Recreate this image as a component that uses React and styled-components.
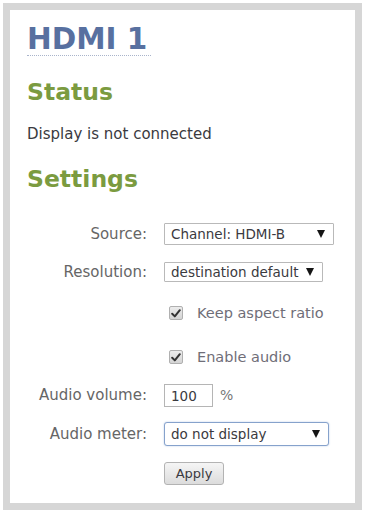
import styled, { createGlobalStyle } from 'styled-components'

const Global = createGlobalStyle`
  html, body {
    margin: 0;
    padding: 0;
    background: #ffffff;
  }
  body {
    font-family: "DejaVu Sans", Verdana, sans-serif;
  }
`;

const Page = styled.div`
  padding: 3px;
`;

const Frame = styled.div`
  box-sizing: border-box;
  width: 359px;
  height: 507px;
  border: 7px solid #d6d6d6;
  background: #fff;
  padding: 13px 0 0 17px;
`;

const Title = styled.h1`
  display: inline-block;
  margin: 0;
  padding-right: 4px;
  font-size: 29.5px;
  line-height: 32px;
  font-weight: bold;
  color: #5870a0;
  border-bottom: 1px dotted #a9b4cb;
`;

const Section = styled.h2`
  margin: ${({ $mt }) => $mt}px 0 0;
  font-size: 23.5px;
  line-height: 28px;
  font-weight: bold;
  color: #7b9b40;
`;

const StatusText = styled.p`
  margin: 19px 0 0;
  font-size: 15px;
  line-height: 18px;
  color: #3a3a40;
`;

const Row = styled.div`
  display: grid;
  grid-template-columns: 120px 1fr;
  column-gap: 17px;
  align-items: center;
  height: 24px;
  margin-top: ${({ $mt }) => $mt}px;
`;

const Label = styled.span`
  text-align: right;
  font-size: 15px;
  color: #666;
`;

const Control = styled.div`
  display: flex;
  align-items: center;
`;

const Select = styled.div`
  box-sizing: border-box;
  display: flex;
  align-items: center;
  justify-content: space-between;
  width: ${({ $w }) => $w}px;
  height: ${({ $h }) => $h}px;
  padding: 0 8px 0 6px;
  border: 1px solid ${({ $focus }) => ($focus ? '#86a2cc' : '#b9b9b9')};
  border-radius: ${({ $focus }) => ($focus ? 3 : 1)}px;
  box-shadow: ${({ $focus }) => ($focus ? '0 0 2px #b8cbe6' : 'none')};
  background: #fff;
  font-size: 13.5px;
  color: #3a3a40;
`;

const Arrow = styled.span`
  width: 0;
  height: 0;
  border-left: 4px solid transparent;
  border-right: 4px solid transparent;
  border-top: 8px solid #151515;
`;

const Check = styled.span`
  box-sizing: border-box;
  display: flex;
  align-items: center;
  justify-content: center;
  width: 14px;
  height: 14px;
  margin-left: 5px;
  border: 1px solid #b0b0b0;
  border-radius: 2px;
  background: linear-gradient(#ececec, #d4d4d4);
`;

const CheckText = styled.span`
  margin-left: 14px;
  font-size: 14.5px;
  color: #6f6e78;
`;

const NumberBox = styled.div`
  box-sizing: border-box;
  width: 49px;
  height: 23px;
  padding: 3px 6px 0;
  border: 1px solid #b5b5b5;
  font-size: 13.5px;
  color: #3a3a40;
`;

const Unit = styled.span`
  margin-left: 7px;
  font-size: 14px;
  color: #777;
`;

const Button = styled.button`
  box-sizing: border-box;
  width: 60px;
  height: 23px;
  padding: 0;
  border: 1px solid #b3b3b3;
  border-radius: 3px;
  background: linear-gradient(#f5f5f5, #dcdcdc);
  font-family: "DejaVu Sans", Verdana, sans-serif;
  font-size: 13px;
  color: #3a3a40;
`;

function CheckMark() {
  return (
    <svg width="10" height="9" viewBox="0 0 10 9">
      <path d="M1.2 4.8 L3.8 7.4 L8.8 1.2" fill="none" stroke="#333" strokeWidth="2" strokeLinecap="round" strokeLinejoin="round" />
    </svg>
  )
}

export default function App() {
  return (
    <Page>
      <Global />
      <Frame>
        <Title>HDMI 1</Title>
        <Section $mt={22}>Status</Section>
        <StatusText>Display is not connected</StatusText>
        <Section $mt={22}>Settings</Section>

        <Row $mt={29}>
          <Label>Source:</Label>
          <Control>
            <Select $w={170} $h={22}>
              <span>Channel: HDMI-B</span>
              <Arrow />
            </Select>
          </Control>
        </Row>
        <Row $mt={14}>
          <Label>Resolution:</Label>
          <Control>
            <Select $w={159} $h={20}>
              <span>destination default</span>
              <Arrow />
            </Select>
          </Control>
        </Row>
        <Row $mt={17}>
          <span />
          <Control>
            <Check><CheckMark /></Check>
            <CheckText>Keep aspect ratio</CheckText>
          </Control>
        </Row>
        <Row $mt={20}>
          <span />
          <Control>
            <Check><CheckMark /></Check>
            <CheckText>Enable audio</CheckText>
          </Control>
        </Row>
        <Row $mt={14}>
          <Label>Audio volume:</Label>
          <Control>
            <NumberBox>100</NumberBox>
            <Unit>%</Unit>
          </Control>
        </Row>
        <Row $mt={15}>
          <Label>Audio meter:</Label>
          <Control>
            <Select $w={165} $h={24} $focus>
              <span>do not display</span>
              <Arrow />
            </Select>
          </Control>
        </Row>
        <Row $mt={15}>
          <span />
          <Control>
            <Button>Apply</Button>
          </Control>
        </Row>
      </Frame>
    </Page>
  )
}
